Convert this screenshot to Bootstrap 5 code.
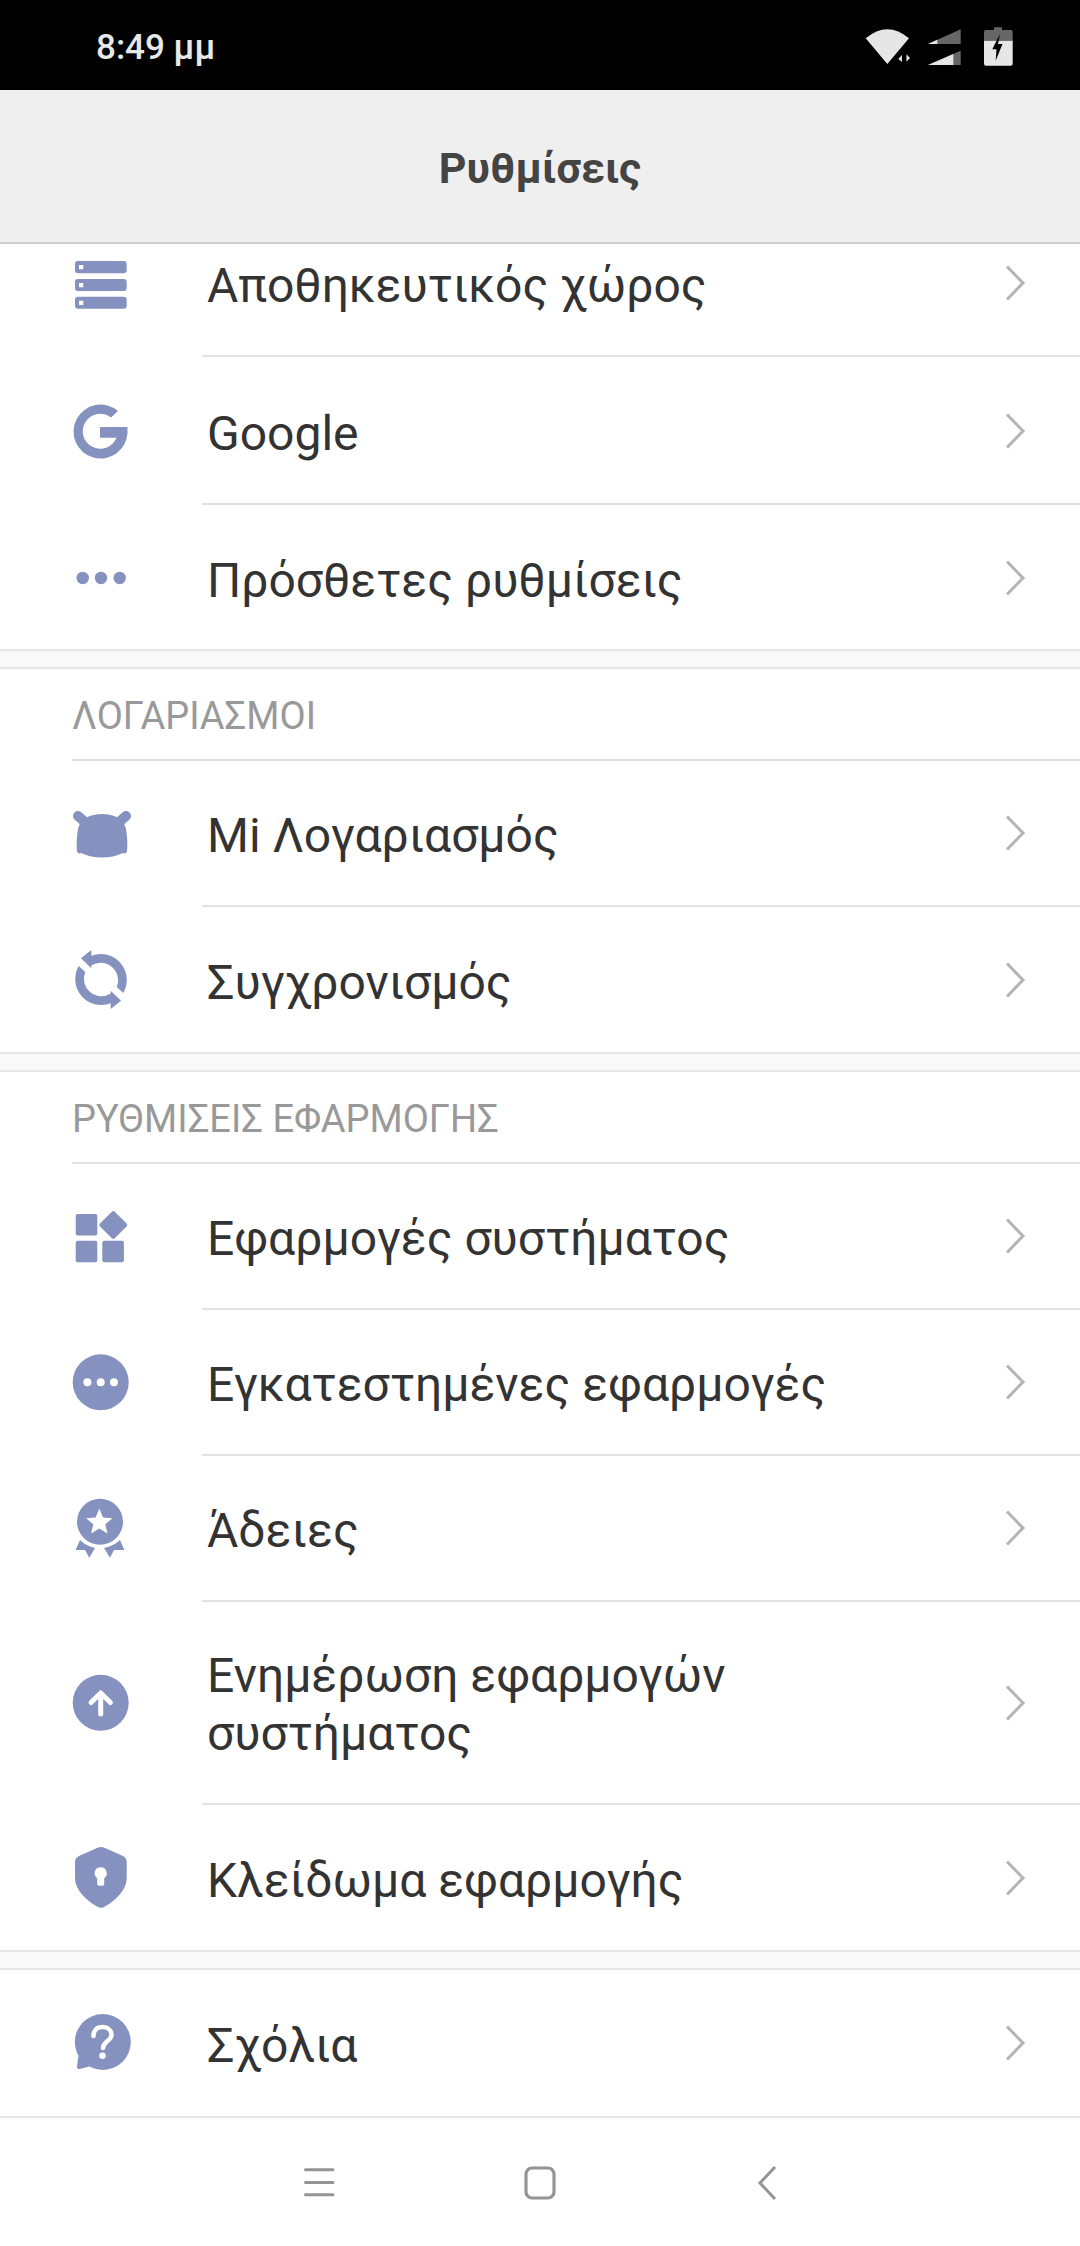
<!DOCTYPE html>
<html lang="el">
<head>
<meta charset="UTF-8">
<meta name="viewport" content="width=device-width, initial-scale=1.0">
<title>Ρυθμίσεις</title>
<link href="https://cdn.jsdelivr.net/npm/bootstrap@5.3.0/dist/css/bootstrap.min.css" rel="stylesheet">
<style>
body { width: 1080px; height: 2246px; overflow: hidden; background: #fff; font-family: Roboto, "Liberation Sans", sans-serif; color: #333; }
.status-strip { height: 90px; background: #000; color: #e8e8e8; padding: 0 67px 0 96px; font-size: 35px; font-weight: 500; }
.status-time { padding-top: 6px; }
.title-strip { height: 154px; background: #efefef; border-bottom: 2px solid #cfcfcf; color: #444; font-size: 43px; font-weight: 700; padding-top: 5px; }
.cut-row { height: 115px; overflow: hidden; }
.cut-row .set-row { margin-top: -33px; }
.set-row { height: 146px; padding: 0 0 0 72px; }
.set-row.tall { height: 203px; }
.row-ico { width: 58px; height: 58px; flex: none; margin-right: 72px; fill: #8591bf; overflow: visible; }
.row-body { flex: 1; height: 100%; border-bottom: 2px solid #e2e2e2; padding: 0 54px 0 5px; font-size: 48px; line-height: 58px; }
.row-txt { padding-top: 5px; }
.set-list > .set-row:last-child .row-body { border-bottom: 0; }
.chev { width: 22px; height: 38px; flex: none; }
.chev path { fill: none; stroke: #b4b4b4; stroke-width: 3; }
.sec-gap { height: 20px; margin-top: -1px; position: relative; background: #f9f9f9; border-top: 2px solid #e6e6e6; border-bottom: 2px solid #e6e6e6; }
.sec-gap.gap-first { margin-top: -2px; }
.sec-label { height: 92px; margin-left: 72px; border-bottom: 2px solid #e2e2e2; color: #999; font-size: 38px; padding-top: 4px; }
.nav-strip { height: 130px; border-top: 2px solid #e6e6e6; padding-top: 2px; }
</style>
</head>
<body>
<div class="status-strip d-flex align-items-center justify-content-between">
    <span class="status-time">8:49 μμ</span>
    <svg width="148" height="44" viewBox="0 0 148 44">
        <path d="M.7 15.300Q22.300-2.700 44 15.300L22.300 41Z" fill="#e6e6e6"/>
        <path d="M32.300 36L37.700 30V40.500ZM40.700 29.500L46 35L40.700 40.500Z" fill="#e6e6e6" stroke="#000" stroke-width="1.500"/>
        <path d="M63 21L95.700 6.300V21Z" fill="#666"/>
        <path d="M63 21L72.300 16.800V21Z" fill="#e6e6e6"/>
        <path d="M63 42L95.700 27.700V42Z" fill="#666"/>
        <path d="M63 42L88.300 30.900V42Z" fill="#e6e6e6"/>
        <path d="M119 9Q119 7 121 7H129V4.300H137V7H146Q147.700 7 147.700 9V17.700H119Z" fill="#666"/>
        <path d="M119 17.700H147.700V40.700Q147.700 42.700 145.700 42.700H121Q119 42.700 119 40.700Z" fill="#e6e6e6"/>
        <path d="M135 11L127.300 26.300H131.500L130.700 37.700L137.500 21H133Z" fill="#000"/>
    </svg>
</div>
<div class="title-strip d-flex align-items-center justify-content-center">Ρυθμίσεις</div>

<div class="set-list">
    <div class="cut-row">
        <div class="set-row d-flex align-items-center">
            <svg class="row-ico" viewBox="0 0 58 58"><rect x="3" y="6" width="51.700" height="12.300" rx="3"/><rect x="3" y="24" width="51.700" height="12" rx="3"/><rect x="3" y="41.700" width="51.700" height="12" rx="3"/><path d="M7 10h4.300v4.300H7zM7 28h4.300v4.300H7zM7 45.700h4.300v4.300H7z" fill="#fff"/></svg>
            <div class="row-body d-flex align-items-center justify-content-between"><span class="row-txt">Αποθηκευτικός χώρος</span><svg class="chev" viewBox="0 0 22 38"><path d="M3 2.500L19 19L3 35.500"/></svg></div>
        </div>
    </div>
    <div class="set-row d-flex align-items-center">
        <svg class="row-ico" viewBox="0 0 58 58"><path d="M46 8A27 27 0 1 0 55.500 30V24H28V34.700H44.500A17.500 17.500 0 1 1 39 14.500Z"/></svg>
        <div class="row-body d-flex align-items-center justify-content-between"><span class="row-txt">Google</span><svg class="chev" viewBox="0 0 22 38"><path d="M3 2.500L19 19L3 35.500"/></svg></div>
    </div>
    <div class="set-row d-flex align-items-center">
        <svg class="row-ico" viewBox="0 0 58 58"><circle cx="10.700" cy="29" r="6.200"/><circle cx="29" cy="29" r="6.200"/><circle cx="47.700" cy="29" r="6.200"/></svg>
        <div class="row-body d-flex align-items-center justify-content-between"><span class="row-txt">Πρόσθετες ρυθμίσεις</span><svg class="chev" viewBox="0 0 22 38"><path d="M3 2.500L19 19L3 35.500"/></svg></div>
    </div>
</div>
<div class="sec-gap gap-first"></div>

<div class="sec-label d-flex align-items-center">ΛΟΓΑΡΙΑΣΜΟΙ</div>
<div class="set-list">
    <div class="set-row d-flex align-items-center">
        <svg class="row-ico" viewBox="0 0 58 58"><path d="M6 11L14 18M54 11L46 18" fill="none" stroke="#8591bf" stroke-width="10" stroke-linecap="round"/><path d="M6 24C8 14 18 9 30 9C42 9 52 14 54 24Q56 36 55 46C55 48 53 49 51 48C38 54 22 54 9 48C7 49 5 48 5 46Q4 36 6 24Z"/></svg>
        <div class="row-body d-flex align-items-center justify-content-between"><span class="row-txt">Mi Λογαριασμός</span><svg class="chev" viewBox="0 0 22 38"><path d="M3 2.500L19 19L3 35.500"/></svg></div>
    </div>
    <div class="set-row d-flex align-items-center">
        <svg class="row-ico" viewBox="0 0 58 58"><path d="M19.300-1L9 7.300L19.300 17.300V14.500A17.500 17.500 0 0 1 44.800 36L51.300 42A26 26 0 0 0 19.300 4.800Z"/><path d="M19.300-1L9 7.300L19.300 17.300V14.500A17.500 17.500 0 0 1 44.800 36L51.300 42A26 26 0 0 0 19.300 4.800Z" transform="rotate(180 29 28.500)"/></svg>
        <div class="row-body d-flex align-items-center justify-content-between"><span class="row-txt">Συγχρονισμός</span><svg class="chev" viewBox="0 0 22 38"><path d="M3 2.500L19 19L3 35.500"/></svg></div>
    </div>
</div>
<div class="sec-gap"></div>

<div class="sec-label d-flex align-items-center">ΡΥΘΜΙΣΕΙΣ ΕΦΑΡΜΟΓΗΣ</div>
<div class="set-list">
    <div class="set-row d-flex align-items-center">
        <svg class="row-ico" viewBox="0 0 58 58"><rect x="3.700" y="6" width="21.600" height="21.600" rx="2"/><rect x="3.700" y="32.700" width="21.600" height="21.600" rx="2"/><rect x="30.300" y="32.700" width="21.600" height="21.600" rx="2"/><rect x="30.900" y="6.600" width="20.800" height="20.800" rx="2" transform="rotate(45 41.300 17)"/></svg>
        <div class="row-body d-flex align-items-center justify-content-between"><span class="row-txt">Εφαρμογές συστήματος</span><svg class="chev" viewBox="0 0 22 38"><path d="M3 2.500L19 19L3 35.500"/></svg></div>
    </div>
    <div class="set-row d-flex align-items-center">
        <svg class="row-ico" viewBox="0 0 58 58"><circle cx="28.700" cy="28.300" r="28"/><circle cx="15.400" cy="28.300" r="4" fill="#fff"/><circle cx="28.700" cy="28.300" r="4" fill="#fff"/><circle cx="42" cy="28.300" r="4" fill="#fff"/></svg>
        <div class="row-body d-flex align-items-center justify-content-between"><span class="row-txt">Εγκατεστημένες εφαρμογές</span><svg class="chev" viewBox="0 0 22 38"><path d="M3 2.500L19 19L3 35.500"/></svg></div>
    </div>
    <div class="set-row d-flex align-items-center">
        <svg class="row-ico" viewBox="0 0 58 58"><circle cx="28" cy="21.700" r="23"/><path d="M27.300 8.500L31 17.500L40.500 18.200L33.300 24.300L35.500 33.600L27.300 28.600L19.100 33.600L21.300 24.300L14.100 18.200L23.600 17.500Z" fill="#fff"/><path d="M8 40Q14 46 23 48L17.300 57.700L13 50L3.700 50ZM48 40Q42 46 32 48L38 57.700L42 50L52.300 50Z"/></svg>
        <div class="row-body d-flex align-items-center justify-content-between"><span class="row-txt">Άδειες</span><svg class="chev" viewBox="0 0 22 38"><path d="M3 2.500L19 19L3 35.500"/></svg></div>
    </div>
    <div class="set-row tall d-flex align-items-center">
        <svg class="row-ico" viewBox="0 0 58 58"><circle cx="28.700" cy="27.800" r="28"/><path d="M28.700 39V18M19 27.500L28.700 18L38.400 27.500" fill="none" stroke="#fff" stroke-width="5" stroke-linecap="round" stroke-linejoin="round"/></svg>
        <div class="row-body d-flex align-items-center justify-content-between"><span class="row-txt">Ενημέρωση εφαρμογών<br>συστήματος</span><svg class="chev" viewBox="0 0 22 38"><path d="M3 2.500L19 19L3 35.500"/></svg></div>
    </div>
    <div class="set-row d-flex align-items-center">
        <svg class="row-ico" viewBox="0 0 58 58"><path d="M25-1Q29-3 33-1L51 7Q54.700 9 54.700 13V29C54.700 41 44 51 33 57.500Q29 60 25 57.500C14 51 3 41 3 29V13Q3 9 7 7Z"/><path d="M28.700 18.300a6 6 0 0 1 3.500 10.900V34.700a2 2 0 0 1-2 2h-3a2 2 0 0 1-2-2V29.200A6 6 0 0 1 28.700 18.300Z" fill="#fff"/></svg>
        <div class="row-body d-flex align-items-center justify-content-between"><span class="row-txt">Κλείδωμα εφαρμογής</span><svg class="chev" viewBox="0 0 22 38"><path d="M3 2.500L19 19L3 35.500"/></svg></div>
    </div>
</div>
<div class="sec-gap"></div>

<div class="set-list">
    <div class="set-row d-flex align-items-center">
        <svg class="row-ico" viewBox="0 0 58 58"><circle cx="30.800" cy="28" r="28"/><path d="M6.300 42L5 53Q5 55.500 7.500 55L17.500 52.500Z"/><path d="M21.500 22C21.500 16 25 13 30.500 13C36 13 39.500 16.500 39.500 21C39.500 27 31 27 31 34" fill="none" stroke="#fff" stroke-width="4.500" stroke-linecap="round"/><circle cx="30.500" cy="41.700" r="3.300" fill="#fff"/></svg>
        <div class="row-body d-flex align-items-center justify-content-between"><span class="row-txt">Σχόλια</span><svg class="chev" viewBox="0 0 22 38"><path d="M3 2.500L19 19L3 35.500"/></svg></div>
    </div>
</div>

<div class="nav-strip d-flex align-items-center justify-content-center">
    <svg width="473" height="36" viewBox="0 0 473 36">
        <path d="M1.500 4.700H29M1.500 17.400H29M1.500 29.800H29" fill="none" stroke="#949494" stroke-width="3" stroke-linecap="round"/>
        <rect x="222" y="3" width="28" height="30" rx="6" fill="none" stroke="#949494" stroke-width="3.200"/>
        <path d="M471 2L456 18L471 34" fill="none" stroke="#949494" stroke-width="3"/>
    </svg>
</div>
<script src="https://cdn.jsdelivr.net/npm/bootstrap@5.3.0/dist/js/bootstrap.bundle.min.js"></script>
</body>
</html>
